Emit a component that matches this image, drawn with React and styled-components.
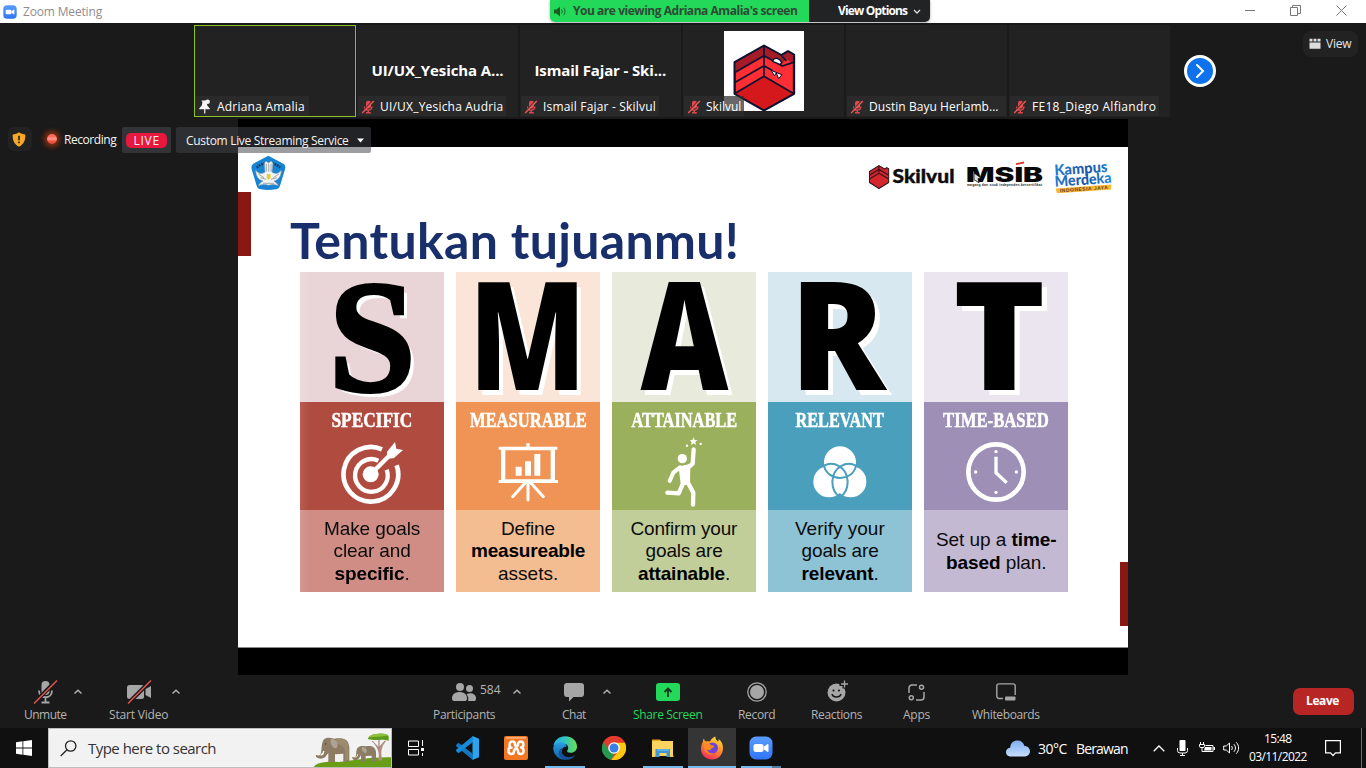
import React, { useLayoutEffect, useRef, useState } from "react";
import styled, { createGlobalStyle, css } from "styled-components";

const Global = createGlobalStyle`
  * { box-sizing: border-box; }
  html, body { margin: 0; padding: 0; background: #1a1a1a; overflow: hidden; }
  svg { display: block; flex: none; }
`;

const ui = `"Open Sans", "Noto Sans", sans-serif`;

/* ---------- text that fills a given width ---------- */

const FitBox = styled.span`
  display: inline-flex;
  justify-content: ${(p) => (p.$scale ? "center" : "flex-start")};
  flex: none;
  width: ${(p) => p.$w}px;
  white-space: pre;
`;
const FitInner = styled.span`
  display: inline-block;
  flex: none;
  white-space: pre;
`;

function Fit({ w, scale, children }) {
  const ref = useRef(null);
  const [style, setStyle] = useState(undefined);
  useLayoutEffect(() => {
    const natural = ref.current.offsetWidth;
    const count = ref.current.textContent.length;
    setStyle(
      scale
        ? { transform: `scaleX(${w / natural})` }
        : { letterSpacing: `${(w - natural) / count}px` }
    );
  }, [w, scale]);
  return (
    <FitBox $w={w} $scale={scale}>
      <FitInner ref={ref} style={style}>{children}</FitInner>
    </FitBox>
  );
}

/* ---------- window frame ---------- */

const Screen = styled.div`
  position: relative;
  width: 1366px;
  height: 768px;
  display: flex;
  flex-direction: column;
  overflow: hidden;
  background: #1a1a1a;
  font-family: ${ui};
  color: #fff;
`;
const TitleBar = styled.header`
  height: 23px;
  flex: none;
  display: flex;
  align-items: center;
  background: #fff;
  padding: 0 19px 0 3px;
  color: #8e8e8e;
  font-size: 12px;
  line-height: 22px;
`;
const WindowTitle = styled.div`
  margin-left: 6px;
  flex: 1;
`;
const WindowButtons = styled.div`
  display: flex;
  gap: 35px;
  padding-bottom: 2px;
`;
const ShareBanner = styled.div`
  position: absolute;
  top: 0;
  left: 550px;
  width: 380px;
  height: 22px;
  display: flex;
  border-radius: 0 0 5px 5px;
  overflow: hidden;
  box-shadow: 0 1px 3px rgba(0, 0, 0, 0.35);
  font-size: 12px;
  font-weight: 700;
  line-height: 22px;
`;
const BannerStatus = styled.div`
  width: 259px;
  display: flex;
  align-items: center;
  gap: 7px;
  padding-left: 4px;
  background: #23d959;
  color: #2c4a36;
`;
const BannerOptions = styled.div`
  flex: 1;
  display: flex;
  align-items: center;
  gap: 6px;
  padding-left: 29px;
  background: #222325;
`;

/* ---------- participant strip ---------- */

const Strip = styled.section`
  height: 96px;
  flex: none;
  display: flex;
  align-items: flex-start;
  padding: 2px 8px 0 194px;
`;
const Tile = styled.div`
  position: relative;
  width: ${(p) => (p.$active ? 162 : 161)}px;
  height: 92px;
  margin-right: ${(p) => (p.$active ? 1 : 2)}px;
  border: 1px solid ${(p) => (p.$active ? "#8bc220" : "#222")};
  background: #222;
  display: flex;
  justify-content: center;
  font-size: 15px;
  font-weight: 700;
  line-height: 88px;
`;
const Avatar = styled.div`
  width: 80px;
  height: 80px;
  margin-top: 5px;
  background: #fff;
`;
const NameTag = styled.div`
  position: absolute;
  left: 0;
  bottom: 0;
  height: 20px;
  width: ${(p) => p.$w}px;
  display: flex;
  align-items: center;
  gap: 5px;
  padding-left: 3px;
  background: rgba(46, 46, 46, 0.72);
  font-size: 12px;
  font-weight: 400;
  line-height: 19px;
  padding-top: 1px;
`;
const NextButton = styled.button`
  width: 32px;
  height: 32px;
  margin: 30px 0 0 12px;
  padding: 0;
  border: 3px solid #fff;
  border-radius: 50%;
  background: #0e72ed;
  display: flex;
  align-items: center;
  justify-content: center;
`;
const ViewButton = styled.div`
  width: 55px;
  height: 26px;
  margin: 6px 0 0 auto;
  border-radius: 8px;
  background: #222;
  display: flex;
  align-items: center;
  gap: 5px;
  padding-left: 6px;
  padding-bottom: 1px;
  font-size: 12px;
  color: #e6e6e6;
`;

/* ---------- status row over the shared screen ---------- */

const StatusRow = styled.div`
  position: absolute;
  top: 127px;
  left: 8px;
  height: 26px;
  display: flex;
  font-size: 12px;
  line-height: 25px;
  color: #f4f4f4;
`;
const ShieldBox = styled.div`
  width: 24px;
  height: 24px;
  border-radius: 6px;
  background: #222;
  display: flex;
  align-items: center;
  justify-content: center;
  padding-right: 2px;
`;
const RecordingDot = styled.div`
  width: 10px;
  height: 10px;
  margin: 7px 7px 0 15px;
  border-radius: 50%;
  background: linear-gradient(#ff6a5c 25%, #ff9c90 50%, #f5503c 75%);
  box-shadow: 0 0 5px 3px rgba(205, 62, 12, 0.6);
`;
const LiveBox = styled.div`
  width: 49px;
  margin-left: 6px;
  border-radius: 2px;
  background: #333437;
  display: flex;
  align-items: center;
  justify-content: center;
`;
const LivePill = styled.div`
  width: 41px;
  height: 15px;
  border-radius: 5px;
  background: #e8173d;
  display: flex;
  justify-content: center;
  line-height: 15px;
`;
const StreamPicker = styled.div`
  width: 195px;
  margin-left: 5px;
  padding-left: 10px;
  border-radius: 2px;
  background: rgba(66, 67, 72, 0.52);
  display: flex;
  align-items: center;
  gap: 8px;
`;

/* ---------- shared slide ---------- */

const Stage = styled.main`
  width: 890px;
  height: 556px;
  flex: none;
  margin-left: 238px;
  padding: 28px 0 27px;
  background: #000;
`;
const Slide = styled.div`
  height: 501px;
  border-bottom: 1px solid #8a8a8a;
  padding: 8px 16px 0 13px;
  background: linear-gradient(#8a1812, #8a1812) 0 45px / 13px 64px no-repeat,
    linear-gradient(#8a1812, #8a1812) 100% 415px / 8px 64px no-repeat, #fff;
`;
const SlideHead = styled.div`
  height: 37px;
  display: flex;
  align-items: flex-start;
`;
const SlideLogos = styled.div`
  margin-left: auto;
  padding-top: 3px;
`;
const SlideTitle = styled.h1`
  margin: 18px 0 0 39px;
  height: 62px;
  font: 700 50px/60px Lato, Carlito, sans-serif;
  color: #182f6b;
`;
const Columns = styled.div`
  display: flex;
  gap: 12px;
  margin-left: 49px;
`;
const Column = styled.section`
  width: 144px;
  flex: none;
  color: #000;
  ${(p) => p.$shade && css`
    mask-image: linear-gradient(90deg, rgba(0, 0, 0, 0.9), #000 10px);
  `}
`;
const LetterBox = styled.div`
  height: 130px;
  display: flex;
  justify-content: center;
  background: ${(p) => p.$bg};
  padding-left: ${(p) => Math.max(p.$shift || 0, 0)}px;
  padding-right: ${(p) => Math.max(-(p.$shift || 0), 0)}px;
  font-family: ${(p) => (p.$serif ? '"Liberation Serif", serif' : '"Open Sans", sans-serif')};
  font-weight: ${(p) => (p.$serif ? 700 : 800)};
  font-size: ${(p) => (p.$serif ? 159 : 150)}px;
  line-height: ${(p) => (p.$serif ? 128 : 121)}px;
  -webkit-text-stroke: ${(p) => (p.$serif ? 4 : 0)}px #000;
  text-shadow: 5px 5px 0 #fff;
`;
const TopicBox = styled.div`
  height: 108px;
  background: ${(p) => p.$bg};
  display: flex;
  flex-direction: column;
  align-items: center;
  padding-top: 7px;
  color: #fff;
  font: 700 20.5px/22px "Liberation Serif", serif;
  -webkit-text-stroke: 0.5px #fff;
`;
const TopicIcon = styled.div`
  height: 79px;
  display: flex;
  align-items: center;
  padding-top: 2px;
`;
const Advice = styled.div`
  height: 82px;
  background: ${(p) => p.$bg};
  display: flex;
  flex-direction: column;
  align-items: center;
  justify-content: center;
  padding-top: 1px;
  font: 400 19px/22.5px "Liberation Sans", Arial, sans-serif;
  white-space: nowrap;
  color: #0c0c0c;
  b { color: #000; }
`;

/* ---------- meeting toolbar ---------- */

const Toolbar = styled.nav`
  height: 53px;
  flex: none;
  display: flex;
  align-items: flex-start;
  color: #a9a9a9;
  font-size: 12px;
`;
const Tool = styled.div`
  position: relative;
  margin-left: ${(p) => p.$gap}px;
  width: ${(p) => p.$w}px;
  padding-top: 4px;
  color: ${(p) => (p.$accent ? "#23d959" : "#b4b4b4")};
`;
const ToolIcon = styled.div`
  height: 26px;
  display: flex;
  align-items: center;
  justify-content: center;
  color: #a6a6a6;
`;
const ToolLabel = styled.div`
  height: 20px;
  line-height: 20px;
`;
const Count = styled.div`
  position: absolute;
  left: 47px;
  top: 5px;
  line-height: 20px;
`;
const CaretSlot = styled.div`
  margin: 14px 0 0 ${(p) => p.$gap}px;
`;
const ShareIcon = styled.div`
  width: 24px;
  height: 18px;
  border-radius: 3px;
  background: #23d959;
  display: flex;
  align-items: center;
  justify-content: center;
`;
const LeaveButton = styled.div`
  margin: 13px 0 0 253px;
  width: 61px;
  height: 27px;
  border-radius: 7px;
  background: #b72525;
  color: #fff;
  font-weight: 700;
  line-height: 26px;
  display: flex;
  justify-content: center;
  padding-right: 2px;
`;

/* ---------- desktop taskbar ---------- */

const Taskbar = styled.footer`
  height: 40px;
  flex: none;
  display: flex;
  align-items: center;
  background: #101010;
`;
const StartButton = styled.div`
  width: 48px;
  display: flex;
  justify-content: center;
`;
const SearchBox = styled.div`
  width: 344px;
  height: 40px;
  border: 1px solid #bdbdbd;
  background: #f2f2f2;
  display: flex;
  align-items: center;
  padding-left: 11px;
  font-size: 15px;
  color: #333;
`;
const SearchText = styled.div`
  margin-left: 11px;
  flex: 1;
`;
const TaskView = styled.div`
  width: 51px;
  padding-left: 16px;
`;
const TaskButton = styled.div`
  width: 48px;
  height: 40px;
  margin-right: 1px;
  display: flex;
  align-items: center;
  justify-content: center;
  background: ${(p) => (p.$active ? "#353535" : "transparent")};
  ${(p) => p.$line && css`
    background-image: linear-gradient(90deg, #76b9ed ${p.$stacked ? "31px, #527fa3 31px" : "0, #76b9ed"});
    background-repeat: no-repeat;
    background-size: ${p.$line}px 2px;
    background-position: 50% 100%;
  `}
`;
const Weather = styled.div`
  display: flex;
  align-items: center;
  margin-left: 220px;
  font-size: 14px;
`;
const Temperature = styled.span`
  margin: 0 9px 0 8px;
`;
const Tray = styled.div`
  display: flex;
  align-items: center;
  margin-left: 25px;
`;
const TrayItem = styled.div`
  margin-right: ${(p) => p.$gap}px;
`;
const Clock = styled.div`
  width: 58px;
  display: flex;
  flex-direction: column;
  align-items: center;
  font-size: 12px;
  line-height: 18px;
  margin-right: 18px;
  padding-bottom: 1px;
`;
const DesktopEdge = styled.div`
  width: 1px;
  height: 40px;
  background: #6b6b6b;
`;

/* ---------- drawings ---------- */

const ZoomLogo = ({ size }) => (
  <svg width={size} height={size} viewBox="0 0 24 24">
    <defs>
      <linearGradient id="zl" x2="0" y2="1"><stop stopColor="#5a9dff" /><stop offset="1" stopColor="#2f74f5" /></linearGradient>
    </defs>
    <rect x="0.5" y="0.5" width="23" height="23" rx="6.5" fill="url(#zl)" />
    <rect x="4.5" y="8" width="10" height="8" rx="2.2" fill="#fff" />
    <path d="M15.2 10.8 19 8.3v7.4l-3.800-2.500z" fill="#fff" stroke="#fff" strokeLinejoin="round" />
  </svg>
);

const MutedMic = () => (
  <svg width="14" height="14" viewBox="0 0 14 14" fill="none">
    <rect x="5" y="0.8" width="5" height="7.6" rx="2.2" fill="#e0484b" />
    <path d="M3.600 6.400c0 5 7.400 5 7.400 0M7.300 10.200v2.300M5 12.800h4.800" stroke="#e0484b" strokeWidth="1.400" />
    <path d="M11.900.6.7 12.400" stroke="#2b2b2b" strokeWidth="1.300" />
    <path d="M12.800 1 1.200 13" stroke="#f0585a" strokeWidth="1.400" />
  </svg>
);

const Pin = () => (
  <svg width="14" height="16" viewBox="0 0 14 16">
    <path d="M3.500 1.500h6l-.8 1.800.6 3.200 2.500 3.100v.6H1.200v-.6l2.600-3.100.6-3.200z" fill="#f4f4f4" />
    <path d="M6 10h1.400v4.500H6z" fill="#ddd" />
    <circle cx="9.600" cy="2.800" r="2.300" fill="#f4f4f4" />
  </svg>
);

const SkilvulMark = ({ size }) => (
  <svg width={size} height={size} viewBox="0 0 240 240" strokeLinejoin="round" strokeLinecap="round">
    <path d="M120 44 172 73 192 61l18 10v117l-90 50-88-50V94z" fill="#ff2d34" stroke="#0d1230" strokeWidth="7" />
    <path d="M120 47v28l-85 49V96zM120 47l48 26 16 14-12 14-52-26zM192 64l15 9v23l-32-19z" fill="#a51b27" />
    <path d="m120 137 86 50-86 48-85-48z" fill="#d4181b" />
    <path d="M120 46v90M35 123l85-49 55 31 31-10M35 153l85-49 24 14M35 186l85-50 86 50M172 74l14 14" fill="none" stroke="#0d1230" strokeWidth="5" />
    <path d="M146 91c4-14 20-10 27 3l-4 7z" fill="#fff" stroke="#0d1230" strokeWidth="4" />
    <path d="m142 119 9 15 6-8 7 17 9-11z" fill="#fff" stroke="#0d1230" strokeWidth="3" />
  </svg>
);

const Emblem = () => (
  <svg width="35" height="36" viewBox="0 0 105 108">
    <path d="M52 2 97 26c6 4 7 10 5 17L87 92c-2 7-6 10-13 11-14 3-30 3-44 0-7-1-11-4-13-11L2 43c-2-7 0-13 5-17z" fill="#1683d3" />
    <path d="M18 38C32 20 72 20 87 38" fill="none" stroke="#0c3550" strokeWidth="7" strokeDasharray="5 3" />
    <path d="M40 24l5-5 8 4 7-4 6 5-3 27c11 8 20 4 28-5 0 17-8 29-22 32 7 5 10 8 13 14-12-4-20-4-29-1-10-3-18-3-31 1 3-6 7-10 14-14C23 76 14 63 14 45c7 10 17 14 28 6z" fill="#f2f3f2" stroke="#7a98aa" strokeWidth="2" />
    <path d="M46 26v24M53 26v24M60 26v24M22 57l17 11M84 57 67 68M36 85h34M28 68l18 5M78 68l-18 5" stroke="#74848c" strokeWidth="2" />
    <path d="M48 57h10l1 12-6 5-6-5z" fill="#e5cf29" />
  </svg>
);

const PartnerLogos = () => (
  <svg width="246" height="36" viewBox="866 158 246 36">
    <defs>
      <linearGradient id="km" gradientUnits="userSpaceOnUse" x1="1055" y1="160" x2="1112" y2="186"><stop stopColor="#2a86d6" /><stop offset=".55" stopColor="#1c55a5" /><stop offset="1" stopColor="#2a8fdc" /></linearGradient>
    </defs>
    <text x="892.500" y="183" fontFamily="Lato" fontWeight="900" fontSize="19.500" textLength="62" lengthAdjust="spacingAndGlyphs" fill="#0c0c0c" stroke="#0c0c0c" strokeWidth=".4">Skilvul</text>
    <g transform="translate(866 160.400) scale(.108 .118)" strokeLinejoin="round">
      <path d="M120 44 172 73 192 61l18 10v117l-90 50-88-50V94z" fill="#d3272d" stroke="#241419" strokeWidth="9" />
      <path d="M36 124l84-48 86 48M36 156l84-48 86 48M120 46v62" fill="none" stroke="#3b1218" strokeWidth="10" />
    </g>
    <text x="966" y="181.500" fontFamily="Inter" fontWeight="900" fontSize="19.500" textLength="77" lengthAdjust="spacingAndGlyphs" fill="#080808">MSIB</text>
    <path d="M1016 163.200l8-1.600v1.800l-8 1.600z" fill="#e8322f" />
    <path d="M974 173l7 5-3 .7 1 4-5-3z" fill="#ddd" stroke="#111" strokeWidth=".8" />
    <text x="967" y="185.500" fontFamily="Liberation Sans" fontWeight="700" fontSize="3.300" textLength="75" lengthAdjust="spacing" fill="#222">magang dan studi independen bersertifikat</text>
    <g transform="rotate(-4 1083 178)" fontFamily="Lato" fontWeight="900" fill="url(#km)">
      <text x="1055" y="173.500" fontSize="15" textLength="53" lengthAdjust="spacingAndGlyphs">Kampus</text>
      <text x="1054.500" y="184.800" fontSize="15" textLength="57" lengthAdjust="spacingAndGlyphs">Merdeka</text>
      <path d="M1055 186.500h56l-1 4.800h-54z" fill="#f9b62d" />
      <text x="1059" y="190.700" fontFamily="Liberation Sans" fontWeight="700" fontSize="5" textLength="48" lengthAdjust="spacing" fill="#5b4630">INDONESIA JAYA</text>
    </g>
  </svg>
);

const Target = () => (
  <svg width="64" height="64" viewBox="2 2 192 192" fill="none" stroke="#fff">
    <path d="M128 30A82 82 0 1 0 172 78" strokeWidth="14" />
    <path d="M117 64A49 49 0 1 0 142 91" strokeWidth="13" />
    <circle cx="94" cy="105" r="24" fill="#fff" stroke="none" />
    <path d="M94 105 164 35" strokeWidth="13" />
    <path d="M143 37 167 8l4 20 20 4-28 25-20 1z" fill="#fff" stroke="none" />
  </svg>
);
const Board = () => (
  <svg width="60" height="60" viewBox="0 0 180 180" fill="#fff">
    <path d="M85 4h10v10h83v9h-7v91h9v9H2v-9h7V23H2v-9h83zM22 25v87h136V25z" fillRule="evenodd" />
    <path d="M53 74h18v27H53zM81 58h18v43H81zM109 36h18v65h-18z" />
    <path d="M90 120v54M82 122l-38 42M98 122l38 42" stroke="#fff" strokeWidth="9" strokeLinecap="round" />
  </svg>
);
const Reacher = () => (
  <svg width="44" height="72" viewBox="0 0 132 216" fill="none" stroke="#fff" strokeLinecap="round" strokeLinejoin="round">
    <path d="m95 4 3 8 8 1-6 5 2 9-7-5-8 5 2-9-6-5 8-1z" fill="#fff" stroke="none" />
    <circle cx="75" cy="29" r="3.500" fill="#fff" stroke="none" /><circle cx="116" cy="24" r="3.500" fill="#fff" stroke="none" />
    <circle cx="61" cy="68" r="14" fill="#fff" stroke="none" />
    <path d="M95 40 92 83 77 96" strokeWidth="13" />
    <path d="M54 94 34 110 23 135" strokeWidth="12" />
    <path d="m54 95 27-6-1 54H60z" fill="#fff" strokeWidth="8" />
    <path d="M62 145 50 172 16 170M78 140l16 30-1 36" strokeWidth="13" />
  </svg>
);
const Venn = () => (
  <svg width="54" height="54" viewBox="0 0 162 162">
    <g fill="#fff"><circle cx="81" cy="52" r="48" /><circle cx="48" cy="110" r="47" /><circle cx="113" cy="110" r="47" /></g>
    <g fill="none" stroke="#4a9fbd" strokeWidth="6">
      <path d="M33 62c28-15 69 2 71 48 0 22-10 38-23 46M129 62c-28-15-69 2-71 48 0 22 10 38 23 46M33 62c9 47 86 51 96 0" />
    </g>
  </svg>
);
const ClockFace = () => (
  <svg width="60" height="60" viewBox="0 0 180 180" fill="none" stroke="#fff">
    <circle cx="90" cy="90" r="83" strokeWidth="14" />
    <path d="M90 44v48l32 30" strokeWidth="10" />
    <g fill="#fff" stroke="none"><circle cx="90" cy="29" r="5" /><circle cx="90" cy="151" r="5" /><circle cx="29" cy="90" r="5" /><circle cx="151" cy="90" r="5" /></g>
  </svg>
);

const Caret = () => (
  <svg width="10" height="6" viewBox="0 0 10 6" fill="none" stroke="#b0b0b0" strokeWidth="1.500"><path d="M1.500 4.500 5 1.300l3.500 3.200" /></svg>
);
const MicIcon = () => (
  <svg width="26" height="26" viewBox="1 0 26 26" fill="none">
    <rect x="9.500" y="2" width="8" height="14" rx="4" fill="#a6a6a6" />
    <path d="M7 11.500c0 9 13 9 13 0M13.500 18.500V23M9.500 23.500h8" stroke="#a6a6a6" strokeWidth="1.800" />
    <path d="M24.500 1.500 2 24" stroke="#1a1a1a" strokeWidth="4" /><path d="M25 1.500 2 24.500" stroke="#e9534f" strokeWidth="1.500" />
  </svg>
);
const VideoIcon = () => (
  <svg width="26" height="26" viewBox="0 0 26 26" fill="none">
    <rect x="1" y="6" width="17" height="14" rx="2.500" fill="#a6a6a6" /><path d="m19.500 10 5.500-3v12l-5.500-3z" fill="#a6a6a6" />
    <path d="M24.500 2 2 24.500" stroke="#1a1a1a" strokeWidth="4" /><path d="M25 1.500 2 24.500" stroke="#e9534f" strokeWidth="1.500" />
  </svg>
);
const PeopleIcon = () => (
  <svg width="24" height="18" viewBox="0 0 24 18" fill="#a6a6a6">
    <circle cx="8" cy="4" r="4" /><path d="M0 15c0-8 15-8 15 0 0 2-.5 3-2 3H2c-1.500 0-2-1-2-3z" />
    <circle cx="17.500" cy="5.500" r="3.500" /><path d="M16 18c.7-3 .2-5-1.500-6.800 4-2 9.500-.5 9.500 4 0 2-.6 2.800-2 2.800z" />
  </svg>
);
const ChatIcon = () => (
  <svg width="20" height="19" viewBox="0 0 20 19" fill="#a6a6a6"><path d="M3 0h14a3 3 0 0 1 3 3v8a3 3 0 0 1-3 3H9.500L5 18.500V14H3a3 3 0 0 1-3-3V3a3 3 0 0 1 3-3z" /></svg>
);
const RecordIcon = () => (
  <svg width="20" height="20" viewBox="0 0 20 20"><circle cx="10" cy="10" r="9.200" fill="none" stroke="#a6a6a6" strokeWidth="1.300" /><circle cx="10" cy="10" r="7" fill="#a6a6a6" /></svg>
);
const SmileIcon = () => (
  <svg width="26" height="24" viewBox="0 1 26 24" fill="none">
    <circle cx="12.500" cy="13.500" r="9" fill="#a6a6a6" />
    <path d="M20.500.500v9M15.500 5h9" stroke="#1a1a1a" strokeWidth="4" /><path d="M20.500 1.500v7M17 5h7" stroke="#a6a6a6" strokeWidth="1.300" />
    <circle cx="9.500" cy="11.500" r="1.100" fill="#1a1a1a" /><circle cx="15" cy="11.500" r="1.100" fill="#1a1a1a" /><path d="M8 15c1 4 8 4 9 0" stroke="#1a1a1a" strokeWidth="1.500" />
  </svg>
);
const AppsIcon = () => (
  <svg width="17" height="17" viewBox="0 0 17 17" fill="none" stroke="#a6a6a6" strokeWidth="1.500">
    <path d="M9 1H4a3 3 0 0 0-3 3v5M8 16h5a3 3 0 0 0 3-3V8" /><circle cx="13.500" cy="3.200" r="2" /><circle cx="3.300" cy="13.700" r="2" />
  </svg>
);
const BoardIcon = () => (
  <svg width="20" height="18" viewBox="0 0 20 18" fill="none" stroke="#a6a6a6" strokeWidth="1.400">
    <path d="M7 15.500H3a2.200 2.200 0 0 1-2.200-2.200V3A2.200 2.200 0 0 1 3 .9h14A2.200 2.200 0 0 1 19.200 3v9" /><rect x="9" y="13.500" width="10.500" height="4" rx="1" fill="#a6a6a6" stroke="none" />
  </svg>
);

const Elephants = () => (
  <svg width="77" height="38" viewBox="0 0 231 114">
    <path d="M0 114c5-14 40-17 75-15 50-5 90-15 156-14v29z" fill="#699d15" />
    <path d="M192 95c8-22-3-44-19-58l3-2 17 18V30h4v22l16-18 3 3c-12 14-18 28-11 56z" fill="#b08d80" />
    <path d="M161 30c6-12 16-14 30-15 15-2 30 0 33 7v14c-12-5-20-3-30-3-12 1-22-1-33-3z" fill="#5d9a1c" />
    <path d="M163 25c8-9 18-10 28-11 15-1 28 0 33 6-10 0-20 2-31 3-10 1-20 1-30 2z" fill="#8fc03c" />
    <path d="M29 32c8-8 20-6 32-3 23-3 42-3 45 26v43H88V74l-25 2v23H43V72c-4 4-9 14-16 16-11 3-24-2-21-9 2-4 7 3 12-1 7-10 2-33 11-46z" fill="#8d7c64" />
    <path d="M65 30c22-3 37 2 38 24v40H94V66c-4-16-18-22-29-22z" fill="#9d8b70" />
    <path d="M50 30c17-2 26 15 17 28-9 0-20-10-17-28z" fill="#ada394" />
    <path d="M29 66c0 7-3 11-9 12" stroke="#fff" strokeWidth="4" fill="none" /><circle cx="35" cy="45" r="2" fill="#333" />
    <path d="M131 56c6-6 14-6 25-4 17-3 28 2 30 17v29h-13V80l-18 1v17h-14V79c-5 6-7 15-17 15-7-1-12-8-8-10 3-1 4 3 8 0 4-6 1-20 7-28z" fill="#8d7c64" />
    <path d="M144 54c12-1 18 10 12 19-8-2-15-8-12-19z" fill="#ada394" />
    <path d="M131 76c0 5-2 7-6 8" stroke="#fff" strokeWidth="3" fill="none" />
  </svg>
);

const VsCode = () => (
  <svg width="24" height="24" viewBox="0 0 24 24">
    <path d="M17.500 0 24 2.800v18.400L17.500 24z" fill="#2aa4ef" /><path d="m1.500 8.500 2-1.800L18 18v6L1 10.200z" fill="#1276c0" /><path d="m1.500 15.500 2 1.800L18 6V0L1 13.800z" fill="#178bd9" />
  </svg>
);
const Xampp = () => (
  <svg width="24" height="24" viewBox="0 0 24 24">
    <rect width="24" height="24" rx="2" fill="#f37623" /><path d="M2 1h20v1.800H2z" fill="#f9ac78" />
    <g fill="none" stroke="#fff" strokeWidth="2.500" strokeLinejoin="round" strokeLinecap="round">
      <path d="M11 9V8.200A2.700 2.700 0 0 0 8.300 5.500 2.700 2.700 0 0 0 5.600 8.200V9.500A2 2 0 0 0 7.500 11.800H6.800A2.300 2.300 0 0 0 4.500 14v1A2.800 2.800 0 0 0 7.300 18 2.800 2.800 0 0 0 10 15.200V14.500L14 9V8.300A2.700 2.700 0 0 1 16.700 5.500 2.700 2.700 0 0 1 19.300 8.200 3 3 0 0 1 17 11.500 3.200 3.200 0 0 1 19.500 14.800 2.900 2.900 0 0 1 16.600 18 2.800 2.800 0 0 1 14 15.200V14.500L11 9" />
    </g>
  </svg>
);
const Edge = () => (
  <svg width="24" height="24" viewBox="0 0 24 24">
    <defs>
      <linearGradient id="eg1"><stop stopColor="#2aa8e8" /><stop offset=".5" stopColor="#33c5bd" /><stop offset="1" stopColor="#6cdd4f" /></linearGradient>
      <linearGradient id="eg2" x2="0" y2="1"><stop stopColor="#2ba0e4" /><stop offset="1" stopColor="#105ba5" /></linearGradient>
    </defs>
    <path d="M.3 10C1.500 4 6 .2 12 .2 19 .2 24 5 24 10.500c0 4-3 6.300-6.500 6.300-2.500 0-4-1-3.200-2.300 2.200-3.200.2-6.800-3.800-6.800C6 7.700 2.500 8.500.3 10z" fill="url(#eg1)" />
    <path d="M.2 11.500c1.500-4 6-6.300 9.500-5 3 .8 4 3 3.500 4.500C9 9.500 5.500 19 13 23.800 6 24.500.2 19 .2 11.500z" fill="url(#eg2)" />
    <path d="M9.300 12c-2.500 4.500 2 10 7.700 9 2-.3 4-1.200 5.300-2.300-3 5.500-11 7-15 2C4.500 17.500 6 13 9.300 12z" fill="#14539b" />
  </svg>
);
const Chrome = () => (
  <svg width="24" height="24" viewBox="0 0 24 24">
    <circle cx="12" cy="12" r="12" fill="#e33b2e" /><path d="M1.600 6 7.500 15l4.500 2.500L9.500 24A12 12 0 0 1 1.600 6z" fill="#249a4e" /><path d="M12 6.500h10.700A12 12 0 0 1 9.300 23.700L16.500 15z" fill="#fdc90f" /><path d="M1.600 6A12 12 0 0 1 22.700 6.500H12L7 13z" fill="#e33b2e" />
    <circle cx="12" cy="12" r="5.800" fill="#fff" /><circle cx="12" cy="12" r="4.500" fill="#397fe8" />
  </svg>
);
const Explorer = () => (
  <svg width="22" height="20" viewBox="0 0 22 20">
    <path d="M0 1.500h8l2 2H0z" fill="#e7a414" /><path d="M0 3h21v15H0z" fill="#fbd35f" /><path d="M3.500 19V11H18v8h-3.500v-4h-7v4z" fill="#3e97d4" /><path d="M5 11h12v2H5z" fill="#5cb0e6" /><path d="M0 17.500h3.500V19H0zM18 17.500h3.500V19H18z" fill="#f4c74d" />
  </svg>
);
const Firefox = () => (
  <svg width="24" height="24" viewBox="0 0 24 24">
    <defs><linearGradient id="ff" x1=".8" x2=".3" y2="1"><stop stopColor="#ffe63c" /><stop offset=".45" stopColor="#ff9425" /><stop offset="1" stopColor="#f72760" /></linearGradient></defs>
    <path d="M3 5c0-1 .5-2 1-2.500.3 1.500 1 2.500 2 3 1.500-.5 3-.4 4 0 1-2.500 3-4 5.500-5-.5 2.500 1 3.500 2.500 5 .7-.5.8-1.500.5-2.500C22 5.500 23 9 23 12c0 7-5 11.500-11 11.500S1 19 1 13c0-3 1-5.500 2-8z" fill="url(#ff)" />
    <circle cx="12.500" cy="12" r="5.500" fill="#7144d9" /><path d="M4 8.500c3-2 6-1 7.500 1 2 0 3 .3 2.500 1.500-2 1-3 1.500-3.500 3-1.500.5-3 0-4-1 .5 3.500 4 5 7 4.500-5 3-10-1-9.500-9z" fill="#ff8a22" />
  </svg>
);
const Cloud = () => (
  <svg width="24" height="17" viewBox="0 0 24 17">
    <defs><linearGradient id="cl" x2="0" y2="1"><stop stopColor="#7eaef2" /><stop offset="1" stopColor="#c6defc" /></linearGradient></defs>
    <path d="M5 16.500C1.500 16.500 0 14.300 0 12c0-2.500 2-4.300 4.200-4.300C4.500 3 7.500.5 11.500.5c3.500 0 6 2 7 5.500 3 0 5.500 2.200 5.500 5.300s-2.500 5.200-5 5.200z" fill="url(#cl)" />
  </svg>
);

/* ---------- content ---------- */

const people = [
  { name: "Adriana Amalia", w: 88, tag: 114, active: true },
  { name: "UI/UX_Yesicha Audria", w: 123, tag: 148, big: "UI/UX_Yesicha A...", bigW: 132 },
  { name: "Ismail Fajar - Skilvul", w: 113, tag: 138, big: "Ismail Fajar - Ski...", bigW: 132 },
  { name: "Skilvul", w: 35, tag: 60, avatar: true },
  { name: "Dustin Bayu Herlamb...", w: 130, tag: 159 },
  { name: "FE18_Diego Alfiandro", w: 124, tag: 149 },
];

const goals = [
  { letter: "S", lw: 86, serif: true, topic: "SPECIFIC", tw: 81, Icon: Target, c: ["#e9d5d7", "#b04b3f", "#cf8d86"],
    lines: [["Make goals", 96], ["clear and", 77], [<><b>specific</b>.</>, 75]] },
  { letter: "M", lw: 117, topic: "MEASURABLE", tw: 117, Icon: Board, c: ["#fae5d8", "#ef9455", "#f3bc91"],
    lines: [["Define", 54], [<b>measureable</b>, 114], ["assets.", 60]] },
  { letter: "A", lw: 88, topic: "ATTAINABLE", tw: 106, Icon: Reacher, c: ["#e8ebdc", "#9ab05d", "#c2ce9a"],
    lines: [["Confirm your", 107], ["goals are", 77], [<><b>attainable</b>.</>, 92]] },
  { letter: "R", lw: 96, shift: -5, topic: "RELEVANT", tw: 88, Icon: Venn, c: ["#d7e8f1", "#4a9fbd", "#8ec2d5"],
    lines: [["Verify your", 90], ["goals are", 77], [<><b>relevant</b>.</>, 77]] },
  { letter: "T", lw: 93, shift: 7, topic: "TIME-BASED", tw: 106, Icon: ClockFace, c: ["#eae5ef", "#9d8fb5", "#c4b9d3"],
    lines: [[<>Set up a <b>time-</b></>, 120], [<><b>based</b> plan.</>, 100]] },
];

export default function App() {
  return (
    <Screen>
      <Global />
      <TitleBar>
        <ZoomLogo size={14} />
        <WindowTitle><Fit w={79}>Zoom Meeting</Fit></WindowTitle>
        <WindowButtons>
          <svg width="11" height="11" viewBox="0 0 11 11"><path d="M1 5.500h10" stroke="#777" /></svg>
          <svg width="11" height="11" viewBox="0 0 11 11" fill="none" stroke="#777"><path d="M.5 2.500h7v8h-7zM2.500 2.500v-2h8v8h-3" /></svg>
          <svg width="11" height="11" viewBox="0 0 11 11" fill="none" stroke="#777"><path d="m.5.500 10 10M10.500.500l-10 10" /></svg>
        </WindowButtons>
      </TitleBar>
      <ShareBanner>
        <BannerStatus>
          <svg width="12" height="11" viewBox="0 0 12 11" fill="none" stroke="#1d5a21"><path d="M0 3.500h2.500L6 .5v10L2.500 7.500H0z" fill="#1d5a21" stroke="none" /><path d="M7.500 3.500c1 1 1 3 0 4M9.500 1.800c2 2 2 5.400 0 7.400" /></svg>
          <Fit w={224}>You are viewing Adriana Amalia's screen</Fit>
        </BannerStatus>
        <BannerOptions>
          <Fit w={69}>View Options</Fit>
          <svg width="8" height="5" viewBox="0 0 8 5" fill="none" stroke="#ddd" strokeWidth="1.300"><path d="m1 1 3 3 3-3" /></svg>
        </BannerOptions>
      </ShareBanner>

      <Strip>
        {people.map((p) => (
          <Tile key={p.name} $active={p.active}>
            {p.big && <Fit w={p.bigW}>{p.big}</Fit>}
            {p.avatar && <Avatar><SkilvulMark size={80} /></Avatar>}
            <NameTag $w={p.tag}>
              {p.active ? <Pin /> : <MutedMic />}
              <Fit w={p.w}>{p.name}</Fit>
            </NameTag>
          </Tile>
        ))}
        <NextButton>
          <svg width="10" height="16" viewBox="0 0 10 16" fill="none" stroke="#fff" strokeWidth="2" strokeLinecap="round"><path d="m2 2 6 6-6 6" /></svg>
        </NextButton>
        <ViewButton>
          <svg width="12" height="12" viewBox="0 0 12 12" fill="#ddd"><path d="M.5 4.500h11v6.300h-11zM.5.800h3v2.700h-3zM4.500.800h3v2.700h-3zM8.500.800h3v2.700h-3z" /></svg>
          <Fit w={25}>View</Fit>
        </ViewButton>
      </Strip>

      <Stage>
        <Slide>
          <SlideHead>
            <Emblem />
            <SlideLogos><PartnerLogos /></SlideLogos>
          </SlideHead>
          <SlideTitle><Fit w={449}>Tentukan tujuanmu!</Fit></SlideTitle>
          <Columns>
            {goals.map(({ letter, lw, shift, serif, topic, tw, Icon, c, lines }) => (
              <Column key={topic} $shade={serif}>
                <LetterBox $bg={c[0]} $shift={shift} $serif={serif}><Fit w={lw} scale>{letter}</Fit></LetterBox>
                <TopicBox $bg={c[1]}>
                  <Fit w={tw} scale>{topic}</Fit>
                  <TopicIcon><Icon /></TopicIcon>
                </TopicBox>
                <Advice $bg={c[2]}>
                  {lines.map(([text, w], i) => <Fit key={i} w={w}>{text}</Fit>)}
                </Advice>
              </Column>
            ))}
          </Columns>
        </Slide>
      </Stage>

      <StatusRow>
        <ShieldBox>
          <svg width="14" height="15" viewBox="0 0 14 15"><path d="M7 .3c2 1.500 4 2 6.300 2.200C13.500 8.500 12 12 7 14.700 2 12 .5 8.500.7 2.500 3 2.300 5 1.800 7 .3z" fill="#f9a825" /><path d="M7 3.800v4.500M7 9.500v1.800" stroke="#2a2211" strokeWidth="1.700" /></svg>
        </ShieldBox>
        <RecordingDot />
        <Fit w={52}>Recording</Fit>
        <LiveBox><LivePill><Fit w={26}>LIVE</Fit></LivePill></LiveBox>
        <StreamPicker>
          <Fit w={163}>Custom Live Streaming Service</Fit>
          <svg width="7" height="5" viewBox="0 0 7 5"><path d="M0 .5h7L3.500 4.500z" fill="#fff" /></svg>
        </StreamPicker>
      </StatusRow>

      <Toolbar>
        <Tool $gap={24} $w={43}><ToolIcon><MicIcon /></ToolIcon><ToolLabel><Fit w={43}>Unmute</Fit></ToolLabel></Tool>
        <CaretSlot $gap={6}><Caret /></CaretSlot>
        <Tool $gap={26} $w={59}><ToolIcon><VideoIcon /></ToolIcon><ToolLabel><Fit w={59}>Start Video</Fit></ToolLabel></Tool>
        <CaretSlot $gap={3}><Caret /></CaretSlot>
        <Tool $gap={252} $w={62}><ToolIcon><PeopleIcon /></ToolIcon><ToolLabel><Fit w={62}>Participants</Fit></ToolLabel><Count><Fit w={21}>584</Fit></Count></Tool>
        <CaretSlot $gap={17}><Caret /></CaretSlot>
        <Tool $gap={40} $w={24}><ToolIcon><ChatIcon /></ToolIcon><ToolLabel><Fit w={24}>Chat</Fit></ToolLabel></Tool>
        <CaretSlot $gap={16}><Caret /></CaretSlot>
        <Tool $gap={21} $w={69} $accent>
          <ToolIcon><ShareIcon><svg width="10" height="11" viewBox="0 0 10 11" fill="none" stroke="#16351f" strokeWidth="1.800"><path d="M5 10V1.500M1.500 5 5 1.500 8.500 5" /></svg></ShareIcon></ToolIcon>
          <ToolLabel><Fit w={69}>Share Screen</Fit></ToolLabel>
        </Tool>
        <Tool $gap={36} $w={37}><ToolIcon><RecordIcon /></ToolIcon><ToolLabel><Fit w={37}>Record</Fit></ToolLabel></Tool>
        <Tool $gap={36} $w={51}><ToolIcon><SmileIcon /></ToolIcon><ToolLabel><Fit w={51}>Reactions</Fit></ToolLabel></Tool>
        <Tool $gap={41} $w={27}><ToolIcon><AppsIcon /></ToolIcon><ToolLabel><Fit w={27}>Apps</Fit></ToolLabel></Tool>
        <Tool $gap={42} $w={68}><ToolIcon><BoardIcon /></ToolIcon><ToolLabel><Fit w={68}>Whiteboards</Fit></ToolLabel></Tool>
        <LeaveButton><Fit w={33}>Leave</Fit></LeaveButton>
      </Toolbar>

      <Taskbar>
        <StartButton>
          <svg width="16" height="16" viewBox="0 0 16 16" fill="#fff"><path d="M0 2.200 6.500 1.300v6.200H0zM7.300 1.200 16 0v7.500H7.300zM0 8.500h6.500v6.200L0 13.800zM7.300 8.500H16V16l-8.700-1.200z" /></svg>
        </StartButton>
        <SearchBox>
          <svg width="17" height="17" viewBox="0 0 17 17" fill="none" stroke="#222" strokeWidth="1.300"><circle cx="10.700" cy="6" r="5.200" /><path d="M7 9.800.7 16" /></svg>
          <SearchText><Fit w={128}>Type here to search</Fit></SearchText>
          <Elephants />
        </SearchBox>
        <TaskView>
          <svg width="17" height="16" viewBox="0 0 17 16" fill="none" stroke="#fff"><path d="M.5 1h10v5.500H.5zM.5 9.500h10V15H.5zM14.500 0v6M14.500 13v3" /><path d="M13 8h3v3h-3z" fill="#fff" stroke="none" /></svg>
        </TaskView>
        <TaskButton><VsCode /></TaskButton>
        <TaskButton><Xampp /></TaskButton>
        <TaskButton $line={40}><Edge /></TaskButton>
        <TaskButton><Chrome /></TaskButton>
        <TaskButton $line={40}><Explorer /></TaskButton>
        <TaskButton $line={48} $active><Firefox /></TaskButton>
        <TaskButton $line={40} $stacked><ZoomLogo size={24} /></TaskButton>
        <Weather>
          <Cloud />
          <Temperature><Fit w={29}>30°C</Fit></Temperature>
          <Fit w={52}>Berawan</Fit>
        </Weather>
        <Tray>
          <TrayItem $gap={12}><svg width="12" height="7" viewBox="0 0 12 7" fill="none" stroke="#fff" strokeWidth="1.300"><path d="M.7 6.300 6 1l5.300 5.300" /></svg></TrayItem>
          <TrayItem $gap={11}><svg width="11" height="16" viewBox="0 0 11 16" fill="none" stroke="#fff"><rect x="2.500" y="0" width="6" height="11" rx="1" fill="#fff" stroke="none" /><path d="M.5 8v2.500q0 2.500 2.500 2.500h5q2.500 0 2.500-2.500V8M5.500 13v3M3 15.500h5" /></svg></TrayItem>
          <TrayItem $gap={8}><svg width="16" height="12" viewBox="0 0 16 12" fill="none" stroke="#fff"><path d="M1.500 0v2M4.500 0v2M.5 2.500h5v2q0 1-1.500 1H2q-1.500 0-1.500-1zM3 5.500v4h11v-6H6.500" /><path d="M6 5h6.500v3.500H5zM14.500 5H16v3h-1.500z" fill="#fff" stroke="none" /></svg></TrayItem>
          <TrayItem $gap={9}><svg width="17" height="14" viewBox="0 0 17 14" fill="none" stroke="#fff"><path d="M.7 5h2.600L6.500 2v10L3.300 9H.7zM8.500 5c1 1 1 3 0 4M10.800 3.200c2.200 2 2.200 5.600 0 7.600M13.200 1.300c3.200 3.200 3.200 8.200 0 11.400" /></svg></TrayItem>
          <Clock><Fit w={28}>15:48</Fit><Fit w={58}>03/11/2022</Fit></Clock>
          <TrayItem $gap={20}><svg width="16" height="17" viewBox="0 0 16 17" fill="none" stroke="#fff" strokeWidth="1.200"><path d="M.6.600h14.800v12.200h-4.900L8 15.500l-2.500-2.700H.6z" /></svg></TrayItem>
          <DesktopEdge />
        </Tray>
      </Taskbar>
    </Screen>
  );
}
